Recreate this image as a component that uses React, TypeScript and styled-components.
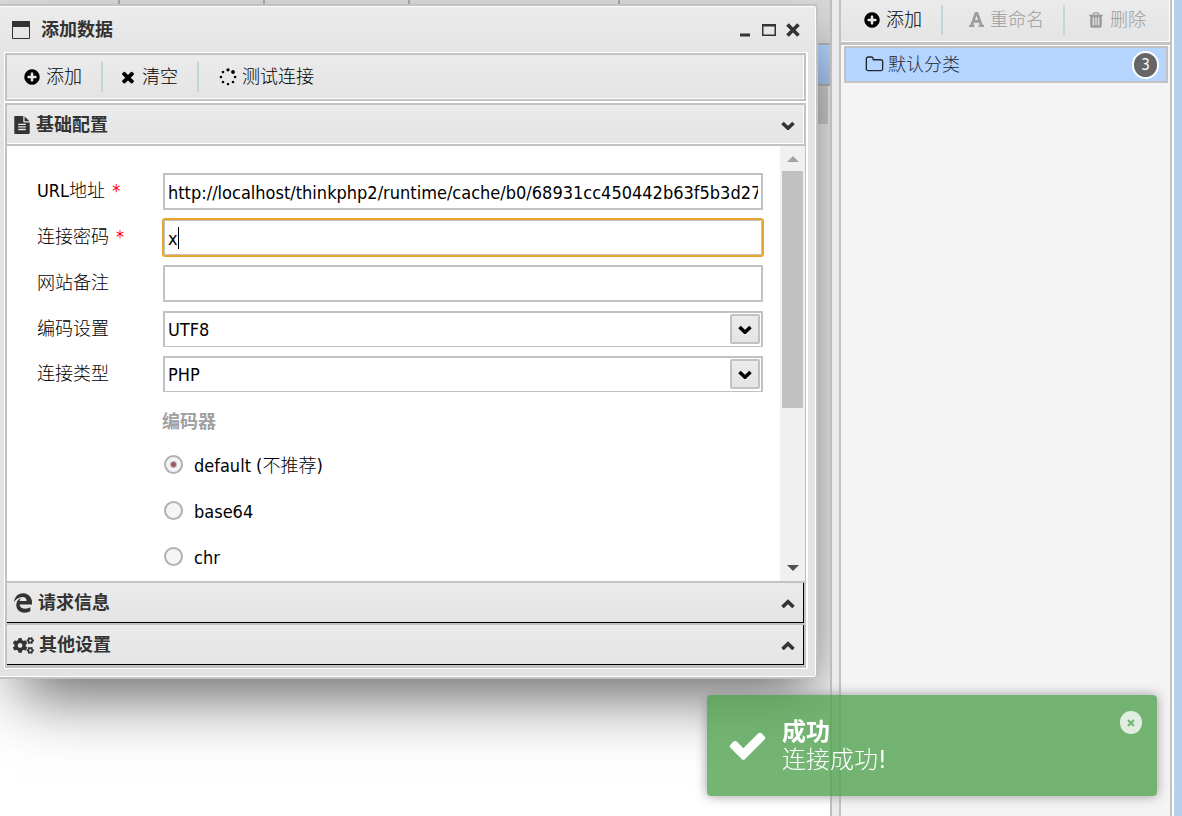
import React from 'react';
import styled, { createGlobalStyle, css } from 'styled-components';
import { FaCogs, FaEdgeLegacy, FaFont } from 'react-icons/fa';

const LINE = '#c2c2c2';
const PANEL = 'linear-gradient(#ebebeb, #e4e4e4)';

const GlobalStyle = createGlobalStyle`
  * { box-sizing: border-box; }
  html, body, #root { height: 100%; }
  body {
    margin: 0;
    overflow: hidden;
    background: #fff;
    color: #000;
    font: 300 18px/24px "DejaVu Sans Condensed", "Noto Sans CJK SC", sans-serif;
  }
  button, input, select { font: inherit; color: inherit; }
`;

const paths = {
  plus: 'M1344 960v-128q0-26-19-45t-45-19h-256v-256q0-26-19-45t-45-19h-128q-26 0-45 19t-19 45v256h-256q-26 0-45 19t-19 45v128q0 26 19 45t45 19h256v256q0 26 19 45t45 19h128q26 0 45-19t19-45v-256h256q26 0 45-19t19-45zm320-64q0 209-103 385.5t-279.5 279.5-385.5 103-385.5-103-279.5-279.5-103-385.5 103-385.5 279.5-279.5 385.5-103 385.5 103 279.5 279.5 103 385.5z',
  times: 'M1490 1322q0 40-28 68l-136 136q-28 28-68 28t-68-28l-294-294-294 294q-28 28-68 28t-68-28l-136-136q-28-28-28-68t28-68l294-294-294-294q-28-28-28-68t28-68l136-136q28-28 68-28t68 28l294 294 294-294q28-28 68-28t68 28l136 136q28 28 28 68t-28 68l-294 294 294 294q28 28 28 68z',
  check: 'M1671 566q0 40-28 68l-724 724-136 136q-28 28-68 28t-68-28l-136-136-362-362q-28-28-28-68t28-68l136-136q28-28 68-28t68 28l294 295 656-657q28-28 68-28t68 28l136 136q28 28 28 68z',
  spinner: 'M526 1394q0 53-37.5 90.5t-90.5 37.5q-52 0-90-38t-38-90q0-53 37.5-90.5t90.5-37.5 90.5 37.5 37.5 90.5zm498 206q0 53-37.5 90.5t-90.5 37.5-90.5-37.5-37.5-90.5 37.5-90.5 90.5-37.5 90.5 37.5 37.5 90.5zm-704-704q0 53-37.5 90.5t-90.5 37.5-90.5-37.5-37.5-90.5 37.5-90.5 90.5-37.5 90.5 37.5 37.5 90.5zm1202 498q0 52-38 90t-90 38q-53 0-90.5-37.5t-37.5-90.5 37.5-90.5 90.5-37.5 90.5 37.5 37.5 90.5zm206-498q0 53-37.5 90.5t-90.5 37.5-90.5-37.5-37.5-90.5 37.5-90.5 90.5-37.5 90.5 37.5 37.5 90.5zm-1202-498q0 53-37.5 90.5t-90.5 37.5-90.5-37.5-37.5-90.5 37.5-90.5 90.5-37.5 90.5 37.5 37.5 90.5zm530-206q0 66-47 113t-113 47-113-47-47-113 47-113 113-47 113 47 47 113zm530 206q0 80-56 136t-136 56-136-56-56-136 56-136 136-56 136 56 56 136z',
  trash: 'M704 1376v-704q0-14-9-23t-23-9h-64q-14 0-23 9t-9 23v704q0 14 9 23t23 9h64q14 0 23-9t9-23zm256 0v-704q0-14-9-23t-23-9h-64q-14 0-23 9t-9 23v704q0 14 9 23t23 9h64q14 0 23-9t9-23zm256 0v-704q0-14-9-23t-23-9h-64q-14 0-23 9t-9 23v704q0 14 9 23t23 9h64q14 0 23-9t9-23zm-544-992h448l-48-117q-7-9-17-11h-317q-10 2-17 11zm928 32v64q0 14-9 23t-23 9h-96v948q0 83-47 143.5t-113 60.5h-832q-66 0-113-58.5t-47-141.5v-952h-96q-14 0-23-9t-9-23v-64q0-14 9-23t23-9h309l70-167q15-37 54-63t79-26h320q40 0 79 26t54 63l70 167h309q14 0 23 9t9 23z',
  folder: 'M1600 1312v-704q0-40-28-68t-68-28h-704q-40 0-68-28t-28-68v-64q0-40-28-68t-68-28h-320q-40 0-68 28t-28 68v960q0 40 28 68t68 28h1216q40 0 68-28t28-68zm128-704v704q0 92-66 158t-158 66h-1216q-92 0-158-66t-66-158v-960q0-92 66-158t158-66h320q92 0 158 66t66 158v32h672q92 0 158 66t66 158z',
  file: 'M1596 476q14 14 28 36h-472v-472q22 14 36 28zm-476 164h544v1056q0 40-28 68t-68 28h-1344q-40 0-68-28t-28-68v-1600q0-40 28-68t68-28h800v544q0 40 28 68t68 28zm160 736v-64q0-14-9-23t-23-9h-704q-14 0-23 9t-9 23v64q0 14 9 23t23 9h704q14 0 23-9t9-23zm0-256v-64q0-14-9-23t-23-9h-704q-14 0-23 9t-9 23v64q0 14 9 23t23 9h704q14 0 23-9t9-23zm0-256v-64q0-14-9-23t-23-9h-704q-14 0-23 9t-9 23v64q0 14 9 23t23 9h704q14 0 23-9t9-23z',
};

const Glyph = ({ name, size = 18 }: { name: keyof typeof paths; size?: number }) => (
  <svg width={size} height={size} viewBox="0 0 1792 1792" fill="currentColor" aria-hidden="true">
    <path d={paths[name]} />
  </svg>
);

const Chevron = ({ up = false }: { up?: boolean }) => (
  <svg width="14" height="10" viewBox="0 0 14 10" fill="none" stroke="currentColor" strokeWidth="3.6" aria-hidden="true">
    <path d={up ? 'M1.5 9 7 3.8 12.5 9' : 'M1.5 3 7 8.2 12.5 3'} />
  </svg>
);

const Desktop = styled.div`
  display: flex;
  height: 100vh;
  border-right: 8px solid #b9d0ea;
`;

const MainPane = styled.main`
  position: relative;
  flex: 1;
  overflow: hidden;
  border-right: 2px solid #bdbdbd;
`;

const GridHead = styled.div`
  display: grid;
  grid-template-columns: 120px 145px 145px 210px 1fr;
  height: 45px;
  background: #d8d8d8;
  border-bottom: 2px solid #b4b4b4;
`;

const GridCell = styled.div`
  border-right: 2px solid #a8a8a8;
`;

const GridRow = styled.div<{ $selected?: boolean }>`
  height: ${p => (p.$selected ? 41 : 38)}px;
  margin-right: ${p => (p.$selected ? 0 : 2)}px;
  background: ${p => (p.$selected ? '#b5d5ff' : '#dcdcdc')};
  border-bottom: 2px solid ${p => (p.$selected ? '#bdbdbd' : '#dcdcdc')};
`;

const Splitter = styled.div`
  flex: 0 0 7px;
  background: #ebebeb;
`;

const SidePane = styled.aside`
  flex: 0 0 333px;
  margin-right: 2px;
  border: solid ${LINE};
  border-width: 0 2px;
  background: #f4f4f4;
`;

const ToolButton = styled.button<{ $lead?: number }>`
  display: flex;
  align-items: center;
  gap: 5px;
  height: 30px;
  padding: 0 19px 0 ${p => p.$lead ?? 22}px;
  border: 0;
  background: none;
  white-space: nowrap;
  & + & { border-left: 2px solid #c3d5dc; }
  &:disabled { color: #9c9c9c; }
`;

const SideToolbar = styled.div`
  display: flex;
  align-items: center;
  height: 45px;
  padding: 0 0 3px;
  border-bottom: 3px solid ${LINE};
  background: ${PANEL};
  box-shadow: inset -1px -1px #fff, 0 1px #fff;
`;

const Category = styled.a`
  display: flex;
  align-items: center;
  gap: 4px;
  height: 37px;
  margin: 1px 2px 0 3px;
  padding: 0 7px 0 19px;
  border: 2px solid ${LINE};
  background: #b5d5ff;
  color: #1f2937;
  text-decoration: none;
`;

const Badge = styled.span`
  width: 27px;
  height: 28px;
  margin-left: auto;
  border: 2px solid #fff;
  border-radius: 14px;
  background: #666;
  color: #fff;
  font-size: 15px;
  text-align: center;
`;

const Dialog = styled.section`
  position: absolute;
  top: 4px;
  left: -6px;
  right: 12px;
  padding: 1px 8px 8px;
  border: 2px solid ${LINE};
  border-radius: 4px;
  background: linear-gradient(#ebebeb, #e3e3e3 60px);
  box-shadow: inset 0 0 0 1px #fff, 12px 32px 60px -14px rgba(0, 0, 0, 0.6);
`;

const TitleBar = styled.header`
  display: flex;
  align-items: center;
  height: 45px;
  padding: 1px 0 0 8px;
  color: #333;
`;

const Title = styled.h1`
  flex: 1;
  margin: 0 0 0 11px;
  font-size: 18px;
  font-weight: 700;
`;

const WindowButton = styled.button`
  display: flex;
  width: 24px;
  height: 24px;
  padding: 0;
  border: 0;
  background: none;
  align-items: center;
  justify-content: center;
`;

const WindowButtons = styled.div`
  display: flex;
  margin-right: 3px;
`;

const Frame = styled.div`
  border: 1px solid #fff;
  border-right-width: 2px;
`;

const Toolbar = styled.div`
  display: flex;
  align-items: center;
  height: 48px;
  margin-bottom: 2px;
  border: 2px solid ${LINE};
  background: ${PANEL};
  box-shadow: inset -1px -1px #fff, 0 2px #fff;
`;

const SectionHead = styled.button<{ $open?: boolean }>`
  display: flex;
  align-items: center;
  gap: 5px;
  width: 100%;
  padding: 0 9px 0 6px;
  background: ${PANEL};
  color: #333;
  font-weight: 700;
  text-align: left;
  > svg:last-child { margin-left: auto; }
  ${p => p.$open
    ? css`
        height: 43px;
        border: 2px solid ${LINE};
        box-shadow: inset -1px -1px #fff;
      `
    : css`
        height: 42px;
        border: solid ${LINE};
        border-width: 2px 2px 0;
        box-shadow: inset -1px -1px #000;
      `}
`;

const Sections = styled.div`
  border-bottom: 3px solid ${LINE};
`;

const Content = styled.div`
  display: flex;
  height: 435px;
  border: solid ${LINE};
  border-width: 0 1px 0 2px;
  background: #fff;
`;

const Form = styled.form`
  flex: 1;
  min-width: 0;
  padding: 22px 17px 0 30px;
  overflow: hidden;
`;

const Row = styled.div<{ $short?: boolean }>`
  display: flex;
  align-items: center;
  height: ${p => (p.$short ? 45 : 46)}px;
`;

const Label = styled.label`
  flex: 0 0 126px;
`;

const Required = styled.span`
  margin-left: 7px;
  color: #f00;
`;

const Field = styled.div`
  position: relative;
  flex: 1;
  min-width: 0;
`;

const TextInput = styled.input<{ $active?: boolean }>`
  display: block;
  width: 100%;
  height: 37px;
  padding: 2px 3px 0;
  border: 2px solid ${LINE};
  background: #fff;
  outline: none;
  caret-color: transparent;
  ${p => p.$active && css`
    padding: 3px 4px 0;
    border: 1px solid #e9a931;
    border-radius: 2px;
    box-shadow: inset 0 0 0 1px #c2c2c2, 0 0 0 1px #e5a52c;
  `}
`;

const Caret = styled.i`
  position: absolute;
  top: 8px;
  left: 15px;
  width: 1px;
  height: 22px;
  background: #000;
`;

const Select = styled.select`
  display: block;
  width: 100%;
  height: 36px;
  padding: 2px 3px 0;
  border: 2px solid ${LINE};
  border-bottom-width: 1px;
  border-radius: 0;
  background: #fff;
  appearance: none;
`;

const DropMark = styled.span`
  position: absolute;
  top: 3px;
  right: 3px;
  display: flex;
  align-items: center;
  justify-content: center;
  width: 30px;
  height: 30px;
  border: 2px solid ${LINE};
  border-radius: 2px;
  background: ${PANEL};
  pointer-events: none;
`;

const Encoders = styled.fieldset`
  margin: 0 0 0 125px;
  padding: 0;
  border: 0;
`;

const Legend = styled.legend`
  height: 45px;
  padding: 14px 0 0;
  color: #a0a0a0;
  font-weight: 700;
`;

const Option = styled.label`
  display: flex;
  align-items: center;
  gap: 11px;
  height: 46px;
`;

const OptionText = styled.span`
  padding-top: 3px;
`;

const Radio = styled.input`
  width: 19px;
  height: 19px;
  margin: 0 0 0 2px;
  border: 2px solid #b5b0b0;
  border-radius: 50%;
  background: #f5f5f6;
  appearance: none;
  &:checked { background: radial-gradient(circle, #97605f 2px, #c9b2b2 3px, #f2f5f7 4px); }
`;

const ScrollTrack = styled.div`
  display: flex;
  flex-direction: column;
  align-items: center;
  width: 25px;
  padding: 10px 0 10px;
  background: #f0f0f0;
  color: #505050;
`;

const ScrollThumb = styled.div`
  width: 21px;
  height: 237px;
  margin: 9px 0 auto;
  background: #c1c1c1;
`;

const Toast = styled.div`
  position: fixed;
  right: 25px;
  bottom: 20px;
  display: flex;
  align-items: center;
  gap: 14px;
  width: 450px;
  height: 101px;
  padding: 0 20px;
  border-radius: 4px;
  background: rgba(81, 163, 81, 0.8);
  box-shadow: 0 0 12px #999;
  color: #fff;
  font-size: 24px;
  line-height: 28px;
`;

const ToastTitle = styled.strong`
  display: block;
  font-weight: 700;
`;

const ToastClose = styled.button`
  position: absolute;
  top: 16px;
  right: 15px;
  display: flex;
  align-items: center;
  justify-content: center;
  width: 22px;
  height: 23px;
  padding: 0;
  border: 0;
  border-radius: 11px;
  background: #e0ede0;
  color: #71b371;
`;

const encoders = ['default (不推荐)', 'base64', 'chr'];

export default function App() {
  return (
    <>
      <GlobalStyle />
      <Desktop>
        <MainPane>
          <GridHead>
            <GridCell /><GridCell /><GridCell /><GridCell />
          </GridHead>
          <GridRow $selected />
          <GridRow />
          <Dialog>
            <TitleBar>
              <svg width="18" height="18" viewBox="0 0 18 18" aria-hidden="true">
                <path d="M.5 5.5h17v12H.5z" fill="none" stroke="#333" />
                <path d="M0 0h18v6H0z" fill="#333" />
              </svg>
              <Title>添加数据</Title>
              <WindowButtons>
                <WindowButton aria-label="最小化">
                  <svg width="12" height="14"><path d="M1 10.500h10v3H1z" fill="currentColor" /></svg>
                </WindowButton>
                <WindowButton aria-label="最大化">
                  <svg width="14" height="12"><path d="M.5 1v10.500h13V1zM0 1.500h14" fill="none" stroke="currentColor" strokeWidth="2" /></svg>
                </WindowButton>
                <WindowButton aria-label="关闭">
                  <svg width="14" height="14"><path d="M1.500 1.500l11 11m0-11l-11 11" stroke="currentColor" strokeWidth="3.600" /></svg>
                </WindowButton>
              </WindowButtons>
            </TitleBar>
            <Frame>
              <Toolbar>
                <ToolButton $lead={16}><Glyph name="plus" />添加</ToolButton>
                <ToolButton $lead={16}><Glyph name="times" />清空</ToolButton>
                <ToolButton $lead={20}><Glyph name="spinner" />测试连接</ToolButton>
              </Toolbar>
              <Sections>
                <SectionHead $open><Glyph name="file" />基础配置<Chevron /></SectionHead>
                <Content>
                  <Form>
                    <Row>
                      <Label htmlFor="url">URL地址<Required>*</Required></Label>
                      <Field>
                        <TextInput id="url" readOnly value="http://localhost/thinkphp2/runtime/cache/b0/68931cc450442b63f5b3d276" />
                      </Field>
                    </Row>
                    <Row>
                      <Label htmlFor="pwd">连接密码<Required>*</Required></Label>
                      <Field>
                        <TextInput id="pwd" $active defaultValue="x" />
                        <Caret />
                      </Field>
                    </Row>
                    <Row>
                      <Label htmlFor="note">网站备注</Label>
                      <Field><TextInput id="note" /></Field>
                    </Row>
                    <Row $short>
                      <Label htmlFor="encode">编码设置</Label>
                      <Field>
                        <Select id="encode"><option>UTF8</option></Select>
                        <DropMark><Chevron /></DropMark>
                      </Field>
                    </Row>
                    <Row $short>
                      <Label htmlFor="type">连接类型</Label>
                      <Field>
                        <Select id="type"><option>PHP</option></Select>
                        <DropMark><Chevron /></DropMark>
                      </Field>
                    </Row>
                    <Encoders>
                      <Legend>编码器</Legend>
                      {encoders.map((name, i) => (
                        <Option key={name}>
                          <Radio type="radio" name="encoder" defaultChecked={i === 0} />
                          <OptionText>{name}</OptionText>
                        </Option>
                      ))}
                    </Encoders>
                  </Form>
                  <ScrollTrack>
                    <svg width="12" height="6"><path d="M0 6 6 0l6 6z" fill="#a3a3a3" /></svg>
                    <ScrollThumb />
                    <svg width="12" height="6"><path d="M0 0h12L6 6z" fill="currentColor" /></svg>
                  </ScrollTrack>
                </Content>
                <SectionHead><FaEdgeLegacy size={20} />请求信息<Chevron up /></SectionHead>
                <SectionHead><FaCogs size={21} />其他设置<Chevron up /></SectionHead>
              </Sections>
            </Frame>
          </Dialog>
        </MainPane>
        <Splitter />
        <SidePane>
          <SideToolbar>
            <ToolButton><Glyph name="plus" />添加</ToolButton>
            <ToolButton $lead={25} disabled><FaFont size={17} />重命名</ToolButton>
            <ToolButton disabled><Glyph name="trash" />删除</ToolButton>
          </SideToolbar>
          <Category href="#default">
            <Glyph name="folder" size={19} />默认分类<Badge>3</Badge>
          </Category>
        </SidePane>
      </Desktop>
      <Toast role="status">
        <Glyph name="check" size={41} />
        <div>
          <ToastTitle>成功</ToastTitle>
          连接成功!
        </div>
        <ToastClose aria-label="关闭提示">
          <svg width="8" height="8"><path d="M1 1l6 6m0-6L1 7" stroke="currentColor" strokeWidth="2" /></svg>
        </ToastClose>
      </Toast>
    </>
  );
}
